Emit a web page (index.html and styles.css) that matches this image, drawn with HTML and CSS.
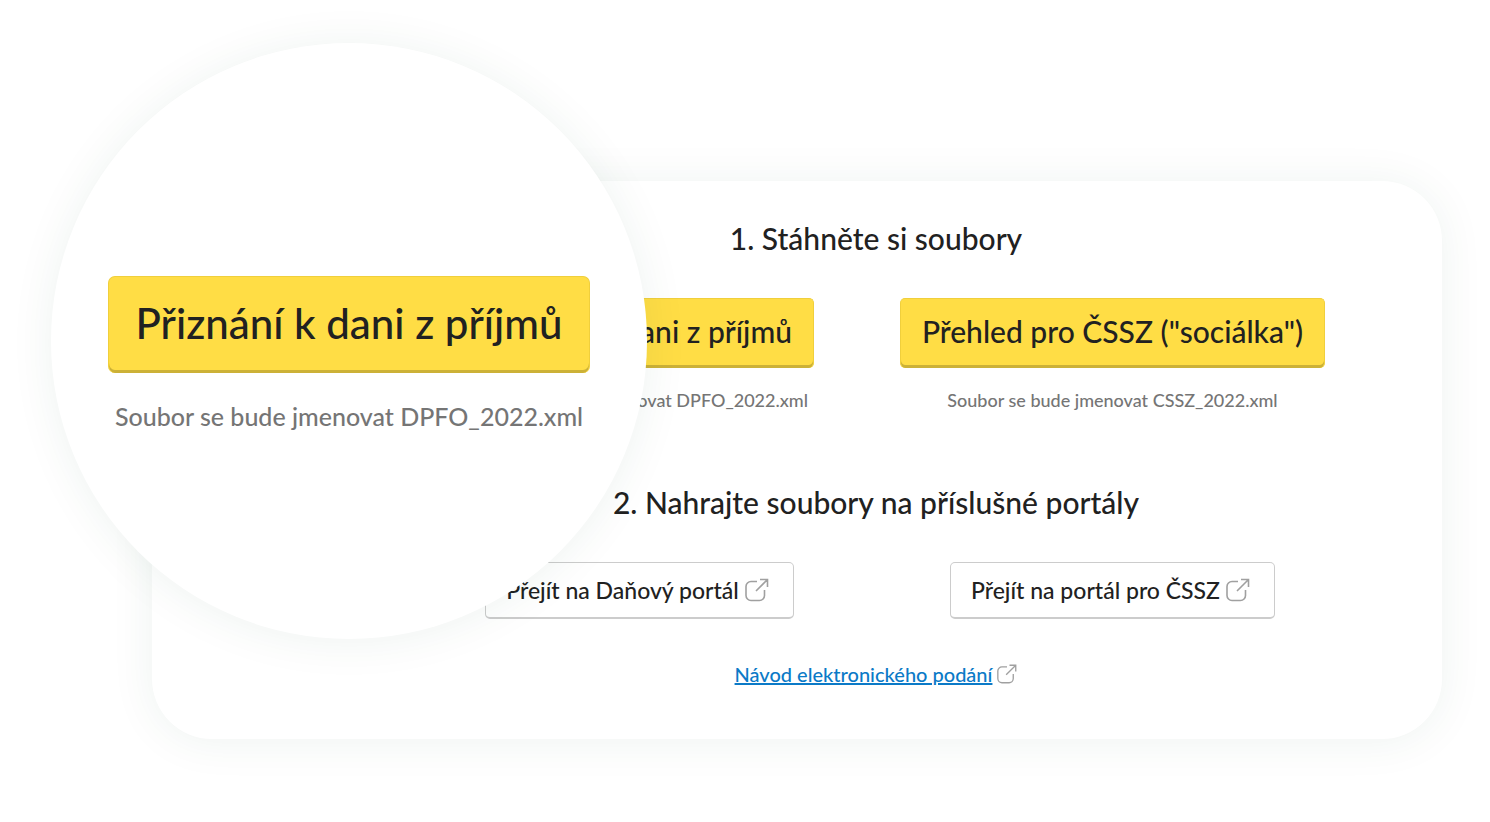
FILE: index.html
```
<!DOCTYPE html>
<html lang="cs">

<head>
    <meta charset="UTF-8">
    <meta name="viewport" content="width=device-width, initial-scale=1.0">
    <title>Podání přiznání</title>

    <link rel="stylesheet" href="styles.css">
</head>

<body>

    <main class="page">

        <div class="card">

            <h2 class="title">1. Stáhněte si soubory</h2>

            <div class="columns files">
                <div class="file">
                    <button type="button" class="btn-download">Přiznání k dani z příjmů</button>
                    <p class="note">Soubor se bude jmenovat DPFO_2022.xml</p>
                </div>
                <div class="file">
                    <button type="button" class="btn-download">Přehled pro ČSSZ ("sociálka")</button>
                    <p class="note">Soubor se bude jmenovat CSSZ_2022.xml</p>
                </div>
            </div>

            <h2 class="title">2. Nahrajte soubory na příslušné portály</h2>

            <div class="columns portals">
                <a class="btn-portal" href="#">Přejít na Daňový portál
                    <svg class="icon" viewBox="0 0 24 24"><path d="M12 3.5H6a5 5 0 0 0-5 5v9a5 5 0 0 0 5 5h8.5a5 5 0 0 0 5-5V12M11 13 22.5 1.5M15 1.5h7.5V9"/></svg>
                </a>
                <a class="btn-portal" href="#">Přejít na portál pro ČSSZ
                    <svg class="icon" viewBox="0 0 24 24"><path d="M12 3.5H6a5 5 0 0 0-5 5v9a5 5 0 0 0 5 5h8.5a5 5 0 0 0 5-5V12M11 13 22.5 1.5M15 1.5h7.5V9"/></svg>
                </a>
            </div>

            <p class="guide">
                <a href="#">Návod elektronického podání</a>
                <svg class="icon icon-small" viewBox="0 0 24 24"><path d="M12 3.5H6a5 5 0 0 0-5 5v9a5 5 0 0 0 5 5h8.5a5 5 0 0 0 5-5V12M11 13 22.5 1.5M15 1.5h7.5V9"/></svg>
            </p>

        </div>

        <!-- magnified first file -->
        <div class="lens">
            <button type="button" class="btn-download btn-large">Přiznání k dani z příjmů</button>
            <p class="note note-large">Soubor se bude jmenovat DPFO_2022.xml</p>
        </div>

    </main>

</body>

</html>
```

FILE: styles.css
```
* {
    box-sizing: border-box;
}

body {
    margin: 0;
    background-color: #fff;
    color: #212121;
    font-family: Lato, sans-serif;
    font-weight: 500;
}

.page {
    position: relative;
    padding: 181px 48px 83px 152px;
}

.card {
    padding: 39px 93px 51px 251px;
    border-radius: 60px;
    background-color: #fff;
    box-shadow: 0 2px 45px rgba(30, 80, 60, 0.07);
}

.title {
    margin: 0;
    font-size: 30px;
    font-weight: 500;
    line-height: 36px;
    text-align: center;
}

.columns {
    display: grid;
    grid-template-columns: 1fr 1fr;
    justify-items: center;
}

.files {
    margin: 42px 0 72px;
}

.portals {
    margin: 42px 0 41px;
}

.file {
    display: flex;
    flex-direction: column;
    align-items: center;
    gap: 20px;
}

.btn-download {
    padding: 14px 21px 19px;
    border: 1px solid #f0cf3c;
    border-bottom: 0;
    border-radius: 5px;
    background-color: #ffdd45;
    box-shadow: inset 0 -3px #ccb137;
    color: #212121;
    font-family: inherit;
    font-size: 30px;
    font-weight: 500;
    line-height: 36px;
    white-space: nowrap;
    cursor: pointer;
}

.note {
    margin: 0;
    color: #757575;
    font-size: 18px;
    line-height: 24px;
    white-space: nowrap;
}

.btn-portal {
    display: flex;
    align-items: center;
    gap: 6px;
    padding: 13px 24px 13px 20px;
    border: 1px solid #ccc;
    border-bottom-width: 2px;
    border-radius: 5px;
    color: #212121;
    font-size: 23px;
    line-height: 28px;
    text-decoration: none;
    white-space: nowrap;
}

.icon {
    flex: none;
    width: 24px;
    height: 24px;
    fill: none;
    stroke: #a0a0a0;
    stroke-width: 1.6;
}

.icon-small {
    width: 20px;
    height: 20px;
}

.guide {
    display: flex;
    justify-content: center;
    align-items: center;
    gap: 5px;
    margin: 0;
    font-size: 20px;
    line-height: 28px;
}

.guide a {
    color: #0b7ac7;
}

/* circle lying over the card */
.lens {
    position: absolute;
    top: 43px;
    left: 51px;
    display: flex;
    flex-direction: column;
    align-items: center;
    gap: 28px;
    width: 596px;
    height: 596px;
    padding-top: 233px;
    border-radius: 50%;
    background-color: #fff;
    box-shadow: 0 2px 45px rgba(30, 80, 60, 0.07);
}

.btn-large {
    padding: 22px 27px 26px;
    border-radius: 7px;
    font-size: 42px;
    line-height: 48px;
}

.note-large {
    font-size: 25px;
    line-height: 30px;
}
```
